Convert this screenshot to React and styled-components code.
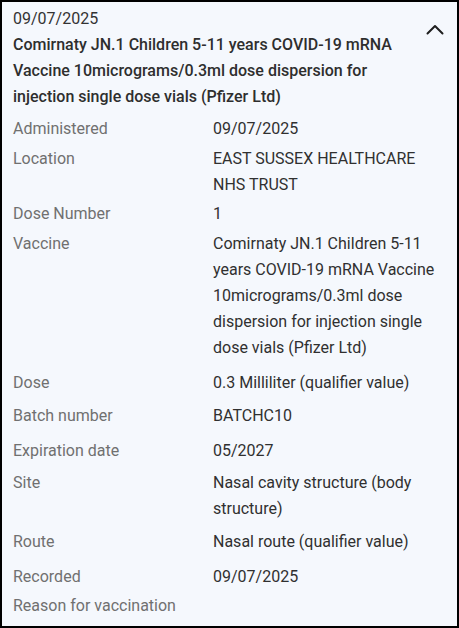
import React from 'react';
import styled, { createGlobalStyle } from 'styled-components';

const GlobalStyle = createGlobalStyle`
    html, body {
        margin: 0;
        padding: 0;
        background: #ffffff;
    }
    body {
        font-family: Roboto, 'Liberation Sans', sans-serif;
    }
`;

const rows = [
    { id: 'administered', label: 'Administered', value: '09/07/2025', space: 6 },
    { id: 'location', label: 'Location', value: 'EAST SUSSEX HEALTHCARE NHS TRUST', space: 4 },
    { id: 'dose-number', label: 'Dose Number', value: '1', space: 3 },
    {
        id: 'vaccine',
        label: 'Vaccine',
        value: 'Comirnaty JN.1 Children 5-11 years COVID-19 mRNA Vaccine 10micrograms/0.3ml dose dispersion for injection single dose vials (Pfizer Ltd)',
        space: 4,
    },
    { id: 'dose', label: 'Dose', value: '0.3 Milliliter (qualifier value)', space: 9 },
    { id: 'batch', label: 'Batch number', value: 'BATCHC10', space: 7 },
    { id: 'expiry', label: 'Expiration date', value: '05/2027', space: 9 },
    { id: 'site', label: 'Site', value: 'Nasal cavity structure (body structure)', space: 6 },
    { id: 'route', label: 'Route', value: 'Nasal route (qualifier value)', space: 7 },
    { id: 'recorded', label: 'Recorded', value: '09/07/2025', space: 9 },
    { id: 'reason', label: 'Reason for vaccination', value: '', space: 3 },
];

const Card = styled.section`
    box-sizing: border-box;
    width: 459px;
    height: 628px;
    border: 2px solid #000000;
    background: #f5f8fd;
    padding: 4px 10px 0 11px;
    overflow: hidden;
    font-size: 16px;
    line-height: 26px;
    color: #303030;
`;

const Header = styled.header`
    display: flex;
    align-items: flex-start;
    gap: 8px;
`;

const HeaderText = styled.div`
    flex: 1;
    display: flex;
    flex-direction: column;
`;

const DateText = styled.div`
    color: #333333;
`;

const Title = styled.h2`
    margin: 0;
    font-size: 16px;
    line-height: 26px;
    font-weight: 500;
    color: #2e2e2e;
`;

const ToggleButton = styled.button`
    display: flex;
    align-items: center;
    justify-content: center;
    width: 24px;
    height: 24px;
    margin-top: 11px;
    padding: 0;
    border: none;
    background: transparent;
    color: #1f1f1f;
    cursor: pointer;
`;

const DetailList = styled.dl`
    margin: 0;
`;

const Row = styled.div`
    display: grid;
    grid-template-columns: 200px 1fr;
    margin-top: ${({ $space }) => $space}px;
`;

const Label = styled.dt`
    margin: 0;
    color: #707070;
`;

const Value = styled.dd`
    margin: 0;
    color: #303030;
`;

const Chevron = () => (
    <svg width="18" height="11" viewBox="0 0 18 11" fill="none">
        <polyline
            points="1.5,9.5 9,2 16.5,9.5"
            stroke="currentColor"
            strokeWidth="2"
            strokeLinecap="round"
            strokeLinejoin="round"
        />
    </svg>
);

const App = () => (
    <>
        <GlobalStyle />
        <Card>
            <Header>
                <HeaderText>
                    <DateText>09/07/2025</DateText>
                    <Title>
                        Comirnaty JN.1 Children 5-11 years COVID-19 mRNA Vaccine
                        10micrograms/0.3ml dose dispersion for injection single dose
                        vials (Pfizer Ltd)
                    </Title>
                </HeaderText>
                <ToggleButton aria-label="Collapse">
                    <Chevron />
                </ToggleButton>
            </Header>
            <DetailList>
                {rows.map(({ id, label, value, space }) => (
                    <Row key={id} $space={space}>
                        <Label>{label}</Label>
                        <Value>{value}</Value>
                    </Row>
                ))}
            </DetailList>
        </Card>
    </>
);

export default App;
